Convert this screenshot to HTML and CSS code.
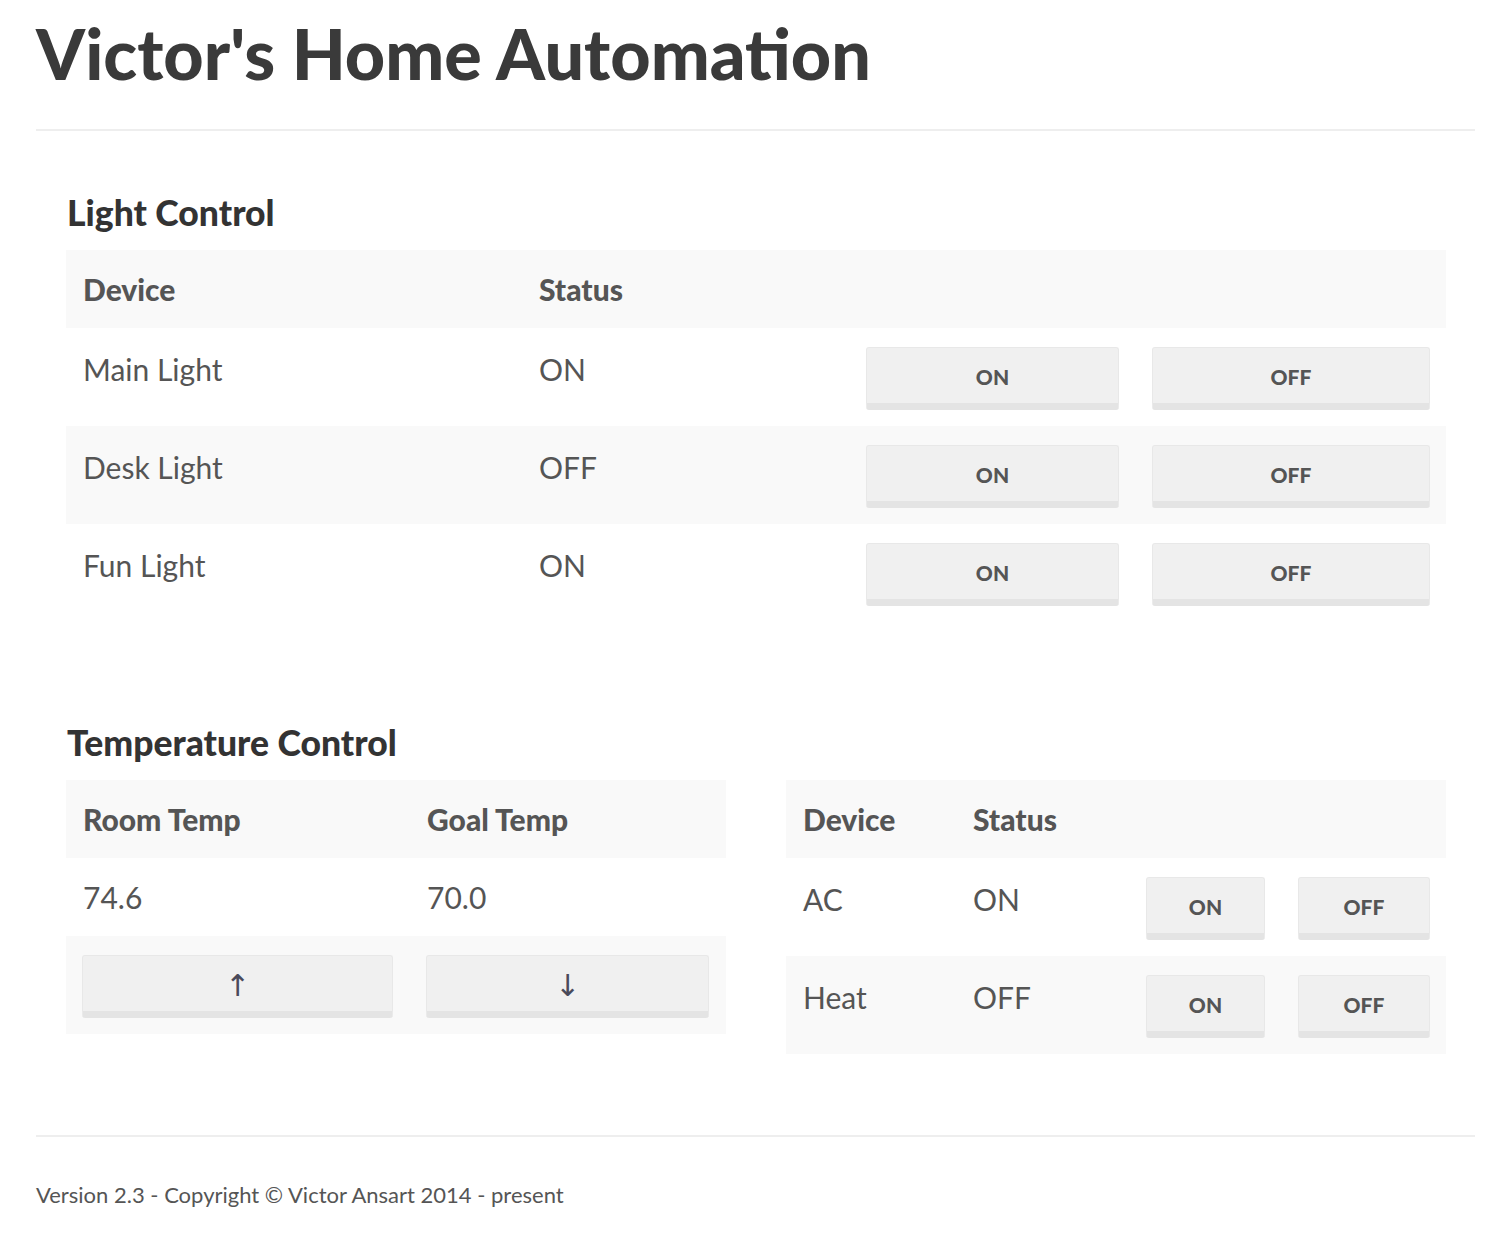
FILE: index.html
```html
<!DOCTYPE html>
<html lang="en">
<head>
<meta charset="utf-8">
<title>Victor's Home Automation</title>
<link rel="stylesheet" href="styles.css">
</head>
<body>
<div class="page">
  <h1 class="title">Victor's Home Automation</h1>
  <hr class="rule">

  <section class="section">
    <h2 class="section-title">Light Control</h2>
    <table class="tbl tbl-lights">
      <colgroup>
        <col class="c-dev"><col class="c-stat"><col class="c-on"><col class="c-off">
      </colgroup>
      <thead>
        <tr><th>Device</th><th>Status</th><th></th><th></th></tr>
      </thead>
      <tbody>
        <tr><td>Main Light</td><td>ON</td><td class="btn-cell"><button class="btn">ON</button></td><td class="btn-cell last"><button class="btn">OFF</button></td></tr>
        <tr class="odd"><td>Desk Light</td><td>OFF</td><td class="btn-cell"><button class="btn">ON</button></td><td class="btn-cell last"><button class="btn">OFF</button></td></tr>
        <tr><td>Fun Light</td><td>ON</td><td class="btn-cell"><button class="btn">ON</button></td><td class="btn-cell last"><button class="btn">OFF</button></td></tr>
      </tbody>
    </table>
  </section>

  <section class="section temp-section">
    <h2 class="section-title">Temperature Control</h2>
    <div class="temp-grid">
      <table class="tbl tbl-temp">
        <colgroup><col class="c-room"><col class="c-goal"></colgroup>
        <thead>
          <tr><th>Room Temp</th><th>Goal Temp</th></tr>
        </thead>
        <tbody>
          <tr class="value-row"><td>74.6</td><td>70.0</td></tr>
          <tr class="odd"><td class="btn-cell"><button class="btn btn-arrow">↑</button></td><td class="btn-cell"><button class="btn btn-arrow">↓</button></td></tr>
        </tbody>
      </table>
      <table class="tbl tbl-hvac">
        <colgroup>
          <col class="c-hdev"><col class="c-hstat"><col class="c-hon"><col class="c-hoff">
        </colgroup>
        <thead>
          <tr><th>Device</th><th>Status</th><th></th><th></th></tr>
        </thead>
        <tbody>
          <tr><td>AC</td><td>ON</td><td class="btn-cell"><button class="btn">ON</button></td><td class="btn-cell last"><button class="btn">OFF</button></td></tr>
          <tr class="odd"><td>Heat</td><td>OFF</td><td class="btn-cell"><button class="btn">ON</button></td><td class="btn-cell last"><button class="btn">OFF</button></td></tr>
        </tbody>
      </table>
    </div>
  </section>

  <hr class="rule rule-foot">
  <footer class="footer">Version 2.3 - Copyright © Victor Ansart 2014 - present</footer>
</div>
</body>
</html>
```

FILE: styles.css
```css
html, body {
  margin: 0;
  padding: 0;
  background: #ffffff;
}

body {
  font-family: "Lato", "Liberation Sans", sans-serif;
  color: #555555;
}

.page {
  padding: 0 33px 0 36px;
}

.title {
  margin: 0;
  padding-top: 13px;
  font-size: 70px;
  line-height: 80px;
  font-weight: 900;
  color: #3a3a3a;
  letter-spacing: 0;
}

.rule {
  border: 0;
  height: 2px;
  background: #eeeeee;
  margin: 36px 0 0;
}

.section {
  padding: 0 29px 0 30px;
}

.section-title {
  margin: 0;
  padding-top: 62px;
  height: 57px;
  font-size: 35.5px;
  line-height: 40px;
  font-weight: 900;
  color: #333333;
  padding-left: 1px;
}

.temp-section .section-title {
  padding-top: 101px;
}

.tbl {
  width: 100%;
  border-collapse: collapse;
  table-layout: fixed;
}

.tbl th {
  background: #f9f9f9;
  height: 78px;
  padding: 0 16px 0 17px;
  text-align: left;
  font-size: 30px;
  font-weight: 900;
  color: #555555;
  vertical-align: middle;
}

.tbl td {
  height: 63px;
  padding: 19px 17px 16px 17px;
  font-size: 30px;
  line-height: 44px;
  vertical-align: top;
  color: #555555;
}

.tbl tr.odd td {
  background: #f9f9f9;
}

.tbl td.btn-cell {
  padding: 19px 17px 16px 16px;
  line-height: normal;
}

.tbl td.btn-cell.last {
  padding-right: 16px;
}

.btn {
  display: block;
  width: 100%;
  height: 63px;
  margin: 0;
  background: #f0f0f0;
  border: 1px solid #e8e8e8;
  border-bottom: 7px solid #e4e4e4;
  border-radius: 3px;
  font-family: "Lato", "Liberation Sans", sans-serif;
  font-size: 21px;
  font-weight: 900;
  color: #555555;
  padding: 2px 0 0;
  cursor: pointer;
}

.btn-arrow {
  font-family: "DejaVu Sans", sans-serif;
  font-weight: 400;
  font-size: 30px;
  color: #4a4a5a;
  padding-top: 4px;
}

/* Light table columns */
.c-dev { width: 456px; }
.c-stat { width: 328px; }
.c-on { width: 286px; }
.c-off { width: 310px; }

.temp-grid {
  display: grid;
  grid-template-columns: 660px 660px;
  column-gap: 60px;
  align-items: start;
}

.c-room { width: 344px; }
.c-goal { width: 316px; }

.tbl-temp .value-row td {
  height: 78px;
  padding: 0 17px;
  vertical-align: middle;
}

.c-hdev { width: 170px; }
.c-hstat { width: 174px; }
.c-hon { width: 152px; }
.c-hoff { width: 164px; }

.rule-foot {
  margin-top: 81px;
}

.footer {
  padding-top: 43px;
  font-size: 22px;
  line-height: 30px;
  color: #555555;
  padding-bottom: 30px;
}
```
